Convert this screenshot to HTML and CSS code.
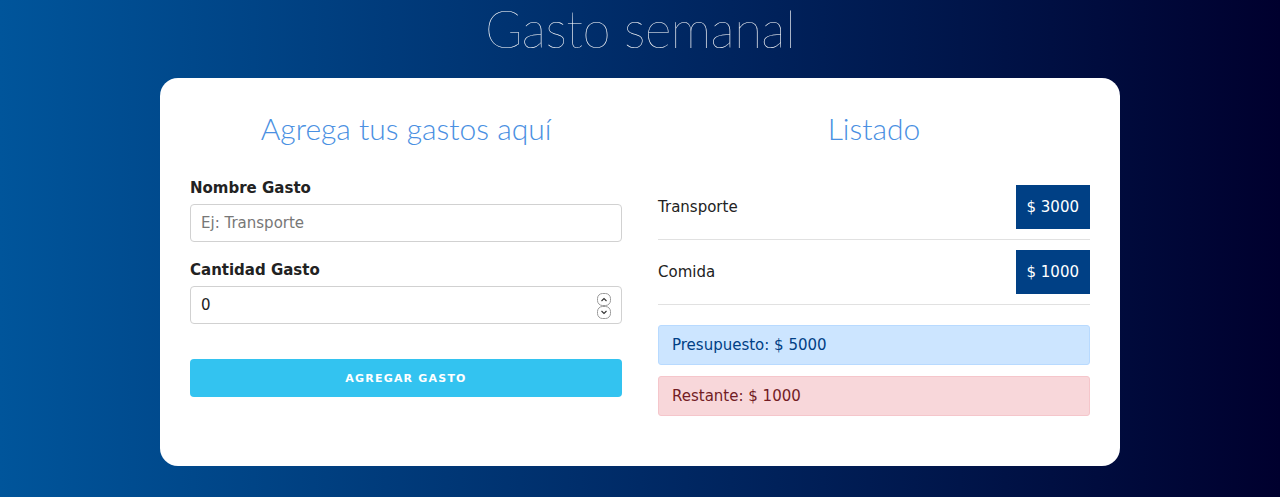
FILE: index.html
```html
<!DOCTYPE html>
<html lang="es">
<head>
<meta charset="utf-8">
<title>Gasto semanal</title>
<link rel="stylesheet" href="styles.css">
</head>
<body>
<header class="header">
  <h1 class="title">Gasto semanal</h1>
</header>
<main class="card">
  <section class="col">
    <h2 class="heading">Agrega tus gastos aquí</h2>
    <form class="form">
      <label class="label" for="nombre">Nombre Gasto</label>
      <input class="field" id="nombre" type="text" placeholder="Ej: Transporte">
      <label class="label" for="cantidad">Cantidad Gasto</label>
      <div class="number-wrap">
        <input class="field field-number" id="cantidad" type="number" value="0">
        <svg class="spinner" width="14" height="26" viewBox="0 0 14 26" aria-hidden="true">
          <rect x="0.5" y="0.5" width="13" height="12" rx="5" fill="#fff" stroke="#9a9a9a"/>
          <path d="M4.5 8 L7 5.5 L9.5 8" fill="none" stroke="#333" stroke-width="1.1"/>
          <rect x="0.5" y="13.5" width="13" height="12" rx="5" fill="#fff" stroke="#9a9a9a"/>
          <path d="M4.5 18 L7 20.5 L9.5 18" fill="none" stroke="#333" stroke-width="1.1"/>
        </svg>
      </div>
      <button class="btn" type="button">Agregar Gasto</button>
    </form>
  </section>
  <section class="col">
    <h2 class="heading">Listado</h2>
    <ul class="list">
      <li class="item"><span>Transporte</span><span class="badge">$ 3000</span></li>
      <li class="item"><span>Comida</span><span class="badge">$ 1000</span></li>
    </ul>
    <div class="alert alert-info">Presupuesto: $ 5000</div>
    <div class="alert alert-danger">Restante: $ 1000</div>
  </section>
</main>
</body>
</html>
```

FILE: styles.css
```css
* { box-sizing: border-box; }
html, body { margin: 0; padding: 0; }
body {
  min-height: 497px;
  background: linear-gradient(to right, #00559b 0%, #002a66 50%, #00002e 100%);
  font-family: "DejaVu Sans", sans-serif;
  font-size: 15px;
  color: #222;
}
.header { height: 78px; display: flex; justify-content: center; }
.title {
  margin: 0;
  font-family: "Lato", "Inter", sans-serif;
  font-weight: 100;
  font-size: 51px;
  line-height: 58px;
  color: #fff;
  letter-spacing: -0.5px;
}
.card {
  width: 960px;
  margin: 0 auto;
  background: #fff;
  border-radius: 18px;
  padding: 30px 30px 50px;
  display: flex;
  gap: 36px;
}
.col { flex: 1 1 0; min-width: 0; }
.heading {
  margin: 0 0 27px;
  font-family: "Lato", "Inter", sans-serif;
  font-weight: 300;
  font-size: 30px;
  line-height: 40px;
  text-align: center;
  color: #4a90e2;
}
.form { display: flex; flex-direction: column; padding-top: 1px; }
.label { font-weight: 700; line-height: 24px; margin-bottom: 4px; }
.field {
  width: 100%;
  height: 38px;
  padding: 6px 10px;
  border: 1px solid #d1d1d1;
  border-radius: 4px;
  font-family: "DejaVu Sans", sans-serif;
  font-size: 15px;
  color: #222;
  margin-bottom: 16px;
  background: #fff;
}
.field::placeholder { color: #777; }
.number-wrap { position: relative; }
.field-number { -moz-appearance: textfield; }
.field-number::-webkit-inner-spin-button,
.field-number::-webkit-outer-spin-button { -webkit-appearance: none; margin: 0; }
.spinner { position: absolute; right: 11px; top: 7px; }
.btn {
  margin-top: 19px;
  height: 38px;
  border: 0;
  border-radius: 4px;
  background: #33c3f0;
  color: #fff;
  font-family: "DejaVu Sans", sans-serif;
  font-size: 11px;
  font-weight: 700;
  letter-spacing: 1.2px;
  text-transform: uppercase;
}
.list { list-style: none; margin: 0; padding: 0; }
.item {
  display: flex;
  align-items: center;
  justify-content: space-between;
  padding: 10px 0;
  border-bottom: 1px solid #e1e1e1;
}
.badge {
  background: #004085;
  color: #fff;
  line-height: 44px;
  padding: 0 11px;
}
.alert {
  margin-top: 20px;
  height: 40px;
  line-height: 38px;
  padding: 0 13px;
  border: 1px solid;
  border-radius: 3px;
}
.alert + .alert { margin-top: 11px; }
.alert-info { background: #cce5ff; border-color: #b8daff; color: #004085; }
.alert-danger { background: #f8d7da; border-color: #f5c6cb; color: #721c24; }
```
